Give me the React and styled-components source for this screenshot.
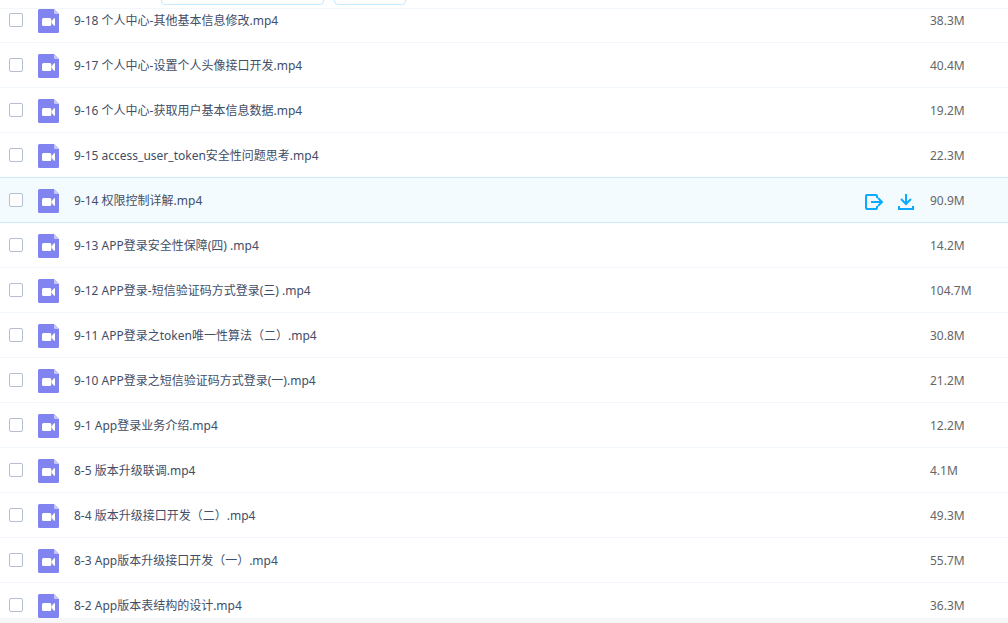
import React, { useState } from "react"
import styled, { createGlobalStyle } from "styled-components"

const GlobalStyle = createGlobalStyle`
  * {
    box-sizing: border-box;
  }

  body {
    margin: 0;
    background: #ffffff;
    color: #424e67;
    font-family: "Noto Sans", "Noto Sans CJK SC", sans-serif;
    font-size: 12px;
  }
`

const Page = styled.main`
  display: flex;
  flex-direction: column;
  height: 100vh;
`

const Toolbar = styled.header`
  display: flex;
  flex: none;
  align-items: flex-end;
  gap: 10px;
  height: 9px;
  padding: 0 0 3px 161px;
  overflow: hidden;
  border-bottom: 1px solid #f2f6fd;
`

const ToolbarButton = styled.button`
  flex: none;
  width: ${({ $wide }) => ($wide ? "163px" : "72px")};
  height: 32px;
  padding: 0;
  border: 1px solid #c3eaff;
  border-radius: 4px;
  background: #ffffff;
`

const ListArea = styled.section`
  flex: 1;
  min-height: 0;
  overflow: hidden;
`

const FileTable = styled.table`
  width: 100%;
  margin-top: -11px;
  table-layout: fixed;
  border-spacing: 0;
`

const SizeCell = styled.td`
  width: 78px;
  padding: 2px 0 0;
  color: #666666;
  line-height: 18px;
`

const NameCell = styled.td`
  padding: 2px 0 0;
`

const FileRow = styled.tr`
  height: 45px;
  background: ${({ $active }) => ($active ? "#f4fbff" : "#ffffff")};

  td {
    border-bottom: 1px solid
      ${({ $active, $beforeActive }) =>
        $active || $beforeActive ? "#cbebfb" : "#f2f6fd"};
  }
`

const NameContent = styled.div`
  display: flex;
  align-items: center;
  padding: 0 16px 0 9px;
`

const Checkbox = styled.input`
  appearance: none;
  flex: none;
  width: 14px;
  height: 14px;
  margin: 0 15px 2px 0;
  border: 1px solid #b4c0cf;
  border-radius: 2px;
  background: #ffffff;

  &:checked {
    background: #09aaff;
  }
`

const FileName = styled.label`
  flex: 1;
  margin-left: 15px;
  line-height: 18px;
  white-space: nowrap;
`

const Actions = styled.div`
  display: flex;
  gap: 14px;
`

const ActionButton = styled.button`
  display: flex;
  padding: 2px 0 0;
  border: 0;
  background: none;
  color: #09aaff;
  cursor: pointer;
`

const VideoIcon = () => (
  <svg width="21" height="24" viewBox="0 0 21 24" aria-hidden="true">
    <path d="M1.5 0H16L21 5V22.5a1.5 1.5 0 0 1-1.5 1.5H1.5a1.5 1.5 0 0 1-1.5-1.5V1.5a1.5 1.5 0 0 1 1.5-1.5z" fill="#8183f1" />
    <path d="M16 0L21 5H17a1 1 0 0 1-1-1z" fill="#c5c6fa" />
    <rect x="4" y="9" width="9.3" height="8" rx="1.5" fill="#ffffff" />
    <path d="M13.6 12.2L16 9.2H17V16.8H16L13.6 13.8z" fill="#ffffff" />
  </svg>
)

const ShareIcon = () => (
  <svg width="19" height="16" viewBox="0 0 19 16" fill="none" stroke="currentColor" strokeWidth="2" aria-hidden="true">
    <path d="M12 4V2a1 1 0 0 0-1-1H2a1 1 0 0 0-1 1V14a1 1 0 0 0 1 1H11a1 1 0 0 0 1-1V12" />
    <path d="M6 8H17M13 4L17 8L13 12" />
  </svg>
)

const DownloadIcon = () => (
  <svg width="16" height="16" viewBox="0 0 16 16" fill="none" stroke="currentColor" strokeWidth="2" aria-hidden="true">
    <path d="M8 0V10M3 5L8 10L13 5" />
    <path d="M1 12V15H15V12" />
  </svg>
)

const Footer = styled.footer`
  flex: none;
  height: 5px;
  background: #f7f7f7;
`

const files = [
  { name: "9-18 个人中心-其他基本信息修改.mp4", size: "38.3M" },
  { name: "9-17 个人中心-设置个人头像接口开发.mp4", size: "40.4M" },
  { name: "9-16 个人中心-获取用户基本信息数据.mp4", size: "19.2M" },
  { name: "9-15 access_user_token安全性问题思考.mp4", size: "22.3M" },
  { name: "9-14 权限控制详解.mp4", size: "90.9M" },
  { name: "9-13 APP登录安全性保障(四) .mp4", size: "14.2M" },
  { name: "9-12 APP登录-短信验证码方式登录(三) .mp4", size: "104.7M" },
  { name: "9-11 APP登录之token唯一性算法（二）.mp4", size: "30.8M" },
  { name: "9-10 APP登录之短信验证码方式登录(一).mp4", size: "21.2M" },
  { name: "9-1 App登录业务介绍.mp4", size: "12.2M" },
  { name: "8-5 版本升级联调.mp4", size: "4.1M" },
  { name: "8-4 版本升级接口开发（二）.mp4", size: "49.3M" },
  { name: "8-3 App版本升级接口开发（一）.mp4", size: "55.7M" },
  { name: "8-2 App版本表结构的设计.mp4", size: "36.3M" },
]

const App = () => {
  const [active, setActive] = useState(4)

  return (
    <Page>
      <GlobalStyle />
      <Toolbar>
        <ToolbarButton type="button" $wide />
        <ToolbarButton type="button" />
      </Toolbar>
      <ListArea>
        <FileTable>
          <tbody>
            {files.map(({ name, size }, index) => (
              <FileRow
                key={name}
                $active={index === active}
                $beforeActive={index === active - 1}
                onMouseEnter={() => setActive(index)}
              >
                <NameCell>
                  <NameContent>
                    <Checkbox type="checkbox" id={`file-${index}`} />
                    <VideoIcon />
                    <FileName htmlFor={`file-${index}`}>{name}</FileName>
                    {index === active && (
                      <Actions>
                        <ActionButton type="button" aria-label="分享">
                          <ShareIcon />
                        </ActionButton>
                        <ActionButton type="button" aria-label="下载">
                          <DownloadIcon />
                        </ActionButton>
                      </Actions>
                    )}
                  </NameContent>
                </NameCell>
                <SizeCell>{size}</SizeCell>
              </FileRow>
            ))}
          </tbody>
        </FileTable>
      </ListArea>
      <Footer />
    </Page>
  )
}

export default App
